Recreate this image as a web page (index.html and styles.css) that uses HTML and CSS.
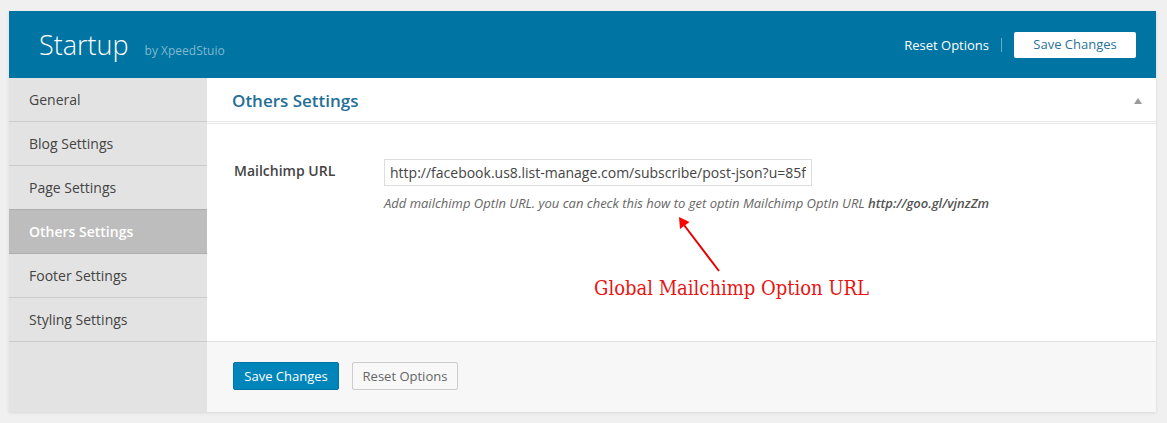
FILE: index.html
```html
<!DOCTYPE html>
<html lang="en">
<head>
<meta charset="utf-8">
<meta name="viewport" content="width=device-width, initial-scale=1">
<title>Startup – Others Settings</title>
<link rel="stylesheet" href="styles.css">
</head>
<body>
<form class="panel" action="#">
  <header class="topbar">
    <h1 class="brand">Startup <small class="author">by XpeedStuio</small></h1>
    <div class="top-actions">
      <button class="link-button" type="button">Reset Options</button>
      <span class="divider"></span>
      <button class="button-light" type="submit">Save Changes</button>
    </div>
  </header>
  <div class="columns">
    <nav class="sidebar">
      <a class="tab" href="#general">General</a>
      <a class="tab" href="#blog">Blog Settings</a>
      <a class="tab" href="#page">Page Settings</a>
      <a class="tab tab-active" href="#others" aria-current="page">Others Settings</a>
      <a class="tab" href="#footer">Footer Settings</a>
      <a class="tab" href="#styling">Styling Settings</a>
    </nav>
    <main class="content">
      <div class="section-head">
        <h2 class="section-title">Others Settings</h2>
        <button class="toggle" type="button" aria-label="Collapse section">
          <svg class="toggle-icon" viewBox="0 0 8 6" aria-hidden="true"><path d="M4 0L8 6H0z"/></svg>
        </button>
      </div>
      <div class="section-body">
        <label class="field-label" for="mailchimp">Mailchimp URL</label>
        <div class="field">
          <input class="field-input" id="mailchimp" type="text" value="http://facebook.us8.list-manage.com/subscribe/post-json?u=85f">
          <p class="hint">Add mailchimp OptIn URL. you can check this how to get optin Mailchimp OptIn URL <a class="hint-link" href="#optin">http://goo.gl/vjnzZm</a></p>
          <div class="note">
            <svg class="note-arrow" viewBox="0 0 44 56" aria-hidden="true"><path class="arrow-line" d="M6 8L41 54"/><path class="arrow-head" d="M1 0L11.500 5L2 12z"/></svg>
            <span class="note-text">Global Mailchimp Option URL</span>
          </div>
        </div>
      </div>
      <footer class="actions">
        <button class="button button-primary" type="submit">Save Changes</button>
        <button class="button" type="button">Reset Options</button>
      </footer>
    </main>
  </div>
</form>
</body>
</html>
```

FILE: styles.css
```css
* {
  box-sizing: border-box;
}

body {
  margin: 0;
  padding: 11px 11px 11px 9px;
  background: #f0f0f0;
  color: #444;
  font-family: "Open Sans", "Noto Sans", sans-serif;
  font-size: 14px;
}

button,
input {
  font-family: inherit;
}

button {
  cursor: pointer;
}

.panel {
  background: #fff;
  box-shadow: 0 1px 3px rgba(0, 0, 0, 0.1);
}

.topbar {
  display: flex;
  align-items: center;
  justify-content: space-between;
  padding: 15px 20px 15px 30px;
  background: #0074a2;
  color: #fff;
}

.brand {
  display: flex;
  align-items: baseline;
  gap: 16px;
  margin: 0;
  font-size: 27px;
  font-weight: 300;
  line-height: 37px;
}

.author {
  color: #7fb9d0;
  font-size: 12px;
  font-weight: 400;
  line-height: 16px;
}

.top-actions {
  display: flex;
  align-items: center;
  gap: 12px;
}

.link-button {
  padding: 0;
  border: 0;
  background: none;
  color: #fff;
  font-size: 13px;
  font-weight: 500;
}

.divider {
  width: 1px;
  height: 14px;
  background: #66acc7;
}

.button-light {
  width: 122px;
  height: 26px;
  padding: 0 0 2px;
  border: 0;
  border-radius: 2px;
  background: #fff;
  color: #2a7398;
  font-size: 13px;
}

.columns {
  display: grid;
  grid-template-columns: 198px 1fr;
}

.sidebar {
  background: #e3e3e3;
}

.tab {
  display: block;
  padding: 12px 20px 11px;
  border-bottom: 1px solid #cdcdcd;
  color: #444;
  line-height: 20px;
  text-decoration: none;
}

.tab-active {
  border-color: #adadad;
  background: #bdbdbd;
  box-shadow: 0 -1px #adadad;
  color: #fff;
  font-weight: 600;
}

.content {
  display: flex;
  flex-direction: column;
}

.section-head {
  display: flex;
  align-items: center;
  justify-content: space-between;
  padding: 11px 14px 8px 25px;
  border-bottom: 3px double #e6e6e6;
}

.section-title {
  margin: 0;
  color: #236f96;
  font-size: 17px;
  font-weight: 600;
  line-height: 24px;
}

.toggle {
  display: flex;
  padding: 0;
  border: 0;
  background: none;
}

.toggle-icon {
  width: 8px;
  height: 6px;
  fill: #9a9a9a;
}

.section-body {
  display: grid;
  grid-template-columns: 150px 1fr;
  flex: 1;
  padding: 35px 27px 38px;
}

.field-label {
  font-weight: 600;
  line-height: 24px;
}

.field-input {
  display: block;
  width: 428px;
  max-width: 100%;
  height: 27px;
  padding: 0 5px;
  border: 1px solid #ddd;
  background: #fff;
  color: #444;
  font-size: 14px;
}

.hint {
  margin: 8px 0 0;
  color: #666;
  font-size: 13px;
  font-style: italic;
  line-height: 18px;
}

.hint-link {
  color: #555;
  font-weight: 600;
  text-decoration: none;
}

.note {
  display: flex;
  flex-direction: column;
  width: max-content;
  margin: 5px 0 0 210px;
  color: #e81414;
}

.note-arrow {
  width: 44px;
  height: 56px;
  margin-left: 84px;
}

.arrow-line {
  fill: none;
  stroke: #e80000;
  stroke-width: 2;
}

.arrow-head {
  fill: #f00;
}

.note-text {
  font-family: "DejaVu Serif Condensed", "DejaVu Serif", serif;
  font-size: 20px;
  line-height: 30px;
}

.actions {
  display: flex;
  gap: 13px;
  padding: 20px 26px 22px;
  border-top: 1px solid #e0e0e0;
  background: #f7f7f7;
}

.button {
  width: 106px;
  height: 28px;
  padding: 0;
  border: 1px solid #ccc;
  border-radius: 2px;
  background: #f8f8f8;
  color: #666;
  font-size: 13px;
}

.button-primary {
  border-color: #0074a2;
  background: #0085ba;
  color: #fff;
  font-weight: 500;
}
```
